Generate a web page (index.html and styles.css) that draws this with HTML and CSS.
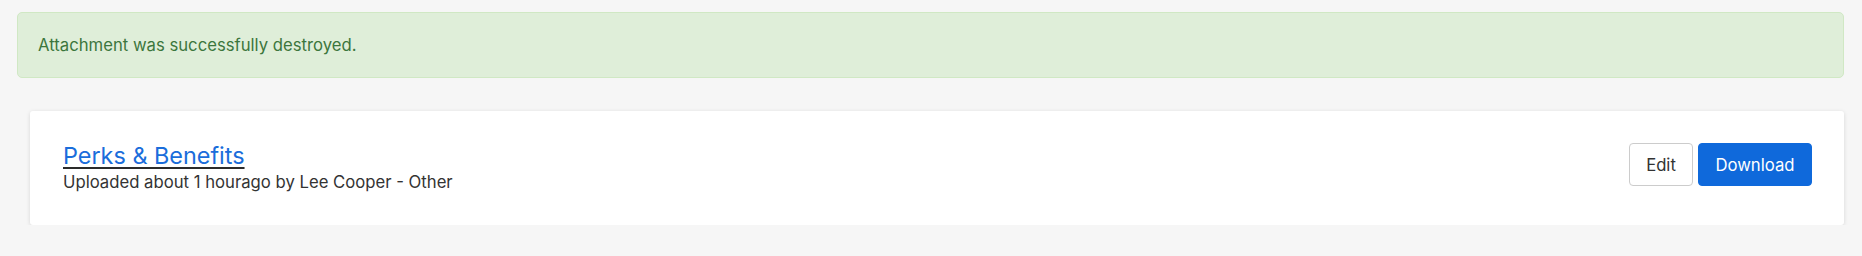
FILE: index.html
```html
<!DOCTYPE html>
<html lang="en">
<head>
<meta charset="utf-8">
<title>Attachments</title>
<link rel="stylesheet" href="styles.css">
</head>
<body>
<div class="page">
  <div class="alert alert-success">Attachment was successfully destroyed.</div>
  <div class="card">
    <div class="card-info">
      <a class="card-title" href="#">Perks &amp; Benefits</a>
      <div class="card-meta">Uploaded about 1 hourago by Lee Cooper - Other</div>
    </div>
    <div class="card-actions">
      <a class="btn btn-default" href="#">Edit</a>
      <a class="btn btn-primary" href="#">Download</a>
    </div>
  </div>
</div>
</body>
</html>
```

FILE: styles.css
```css
html, body {
  margin: 0;
  padding: 0;
  background: #f6f6f6;
  font-family: Inter, "Liberation Sans", sans-serif;
  color: #333;
}

.page {
  padding: 12px 18px 0 17px;
}

.alert {
  border: 1px solid #d0e8c4;
  border-radius: 5px;
  padding: 20px 20px;
  font-size: 16.7px;
  line-height: 24px;
}

.alert-success {
  background: #dfeed9;
  color: #3c763d;
}

.card {
  margin: 33px 0 0 13px;
  background: #fff;
  border-radius: 3px;
  box-shadow: 0 1px 4px rgba(0, 0, 0, 0.13);
  padding: 30px 32px 31px 33px;
  display: flex;
  justify-content: space-between;
  align-items: flex-start;
}

.card-info {
  display: flex;
  flex-direction: column;
  align-items: flex-start;
}

.card-title {
  font-size: 23.4px;
  line-height: 29px;
  color: #1a6ddb;
  text-decoration: underline;
  text-decoration-color: #2b2b2b;
  text-decoration-thickness: 2px;
  text-underline-offset: 3px;
}

.card-meta {
  font-size: 16.7px;
  line-height: 24px;
  color: #333;
}

.card-actions {
  display: flex;
  gap: 5px;
  padding-top: 2px;
}

.btn {
  display: inline-flex;
  align-items: center;
  justify-content: center;
  height: 43px;
  box-sizing: border-box;
  border: 1px solid transparent;
  border-radius: 4px;
  font-size: 16.7px;
  text-decoration: none;
}

.btn-default {
  width: 64px;
  background: #fff;
  border-color: #cccccc;
  color: #333;
}

.btn-primary {
  width: 114px;
  background: #0f69db;
  border-color: #0f69db;
  color: #fff;
}
```
